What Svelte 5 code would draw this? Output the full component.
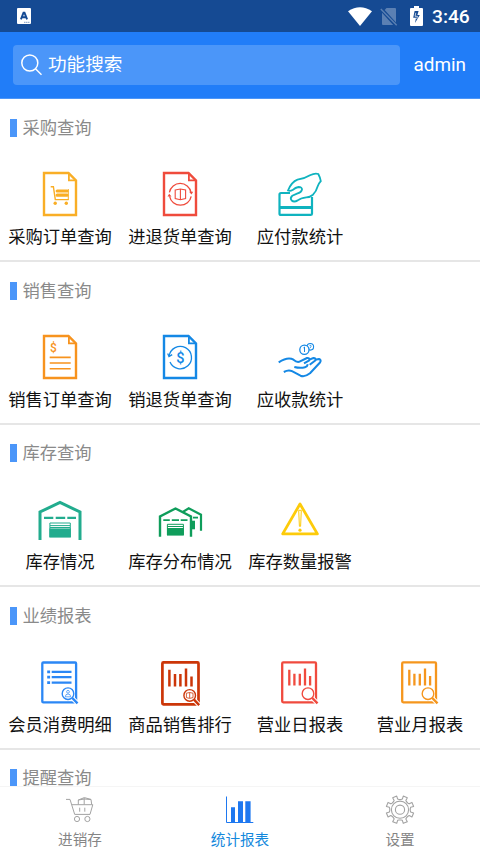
<script>
  const sections = [
    {
      title: '采购查询',
      items: [
        { icon: 'order', label: '采购订单查询', color: '#f9ae26' },
        { icon: 'return', label: '进退货单查询', color: '#ef4b3c' },
        { icon: 'pay', label: '应付款统计', color: '#0fb3bf' }
      ]
    },
    {
      title: '销售查询',
      items: [
        { icon: 'bill', label: '销售订单查询', color: '#f7931e' },
        { icon: 'refund', label: '销退货单查询', color: '#1488e5' },
        { icon: 'receive', label: '应收款统计', color: '#1488e5' }
      ]
    },
    {
      title: '库存查询',
      items: [
        { icon: 'house', label: '库存情况', color: '#22ac8e' },
        { icon: 'houses', label: '库存分布情况', color: '#0f9d5b' },
        { icon: 'warn', label: '库存数量报警', color: '#fdcb0a' }
      ]
    },
    {
      title: '业绩报表',
      items: [
        { icon: 'member', label: '会员消费明细', color: '#2b87f5' },
        { icon: 'rank', label: '商品销售排行', color: '#cc3608' },
        { icon: 'report', label: '营业日报表', color: '#f04a3e' },
        { icon: 'report', label: '营业月报表', color: '#f5961d' }
      ]
    },
    { title: '提醒查询', items: [] }
  ];

  const tabs = [
    { icon: 'cart', label: '进销存' },
    { icon: 'chart', label: '统计报表' },
    { icon: 'gear', label: '设置' }
  ];

  let active = $state(1);

  // eight teeth, with a gap pointing straight up
  const gear = Array.from({ length: 8 }, (_, i) => {
    const mid = i * 45 + 22.5;
    return [[-17, 10.3], [-10, 10.9], [-9, 14], [9, 14], [10, 10.9], [17, 10.3]]
      .map(([d, r]) => {
        const a = ((mid + d) * Math.PI) / 180;
        return `${(20 + r * Math.sin(a)).toFixed(2)},${(19.7 - r * Math.cos(a)).toFixed(2)}`;
      })
      .join(' ');
  }).join(' ');
</script>

{#snippet page()}
  <path d="M14 9H38.5L46 16.5V51H14Z" stroke-width="2.4" />
  <path d="M38.9 9.5V16.3H45.5" stroke-width="1.8" />
{/snippet}

{#snippet glass(x, y)}
  <path d="M{x + 4} {y + 4}L{x + 9.5} {y + 9.7}" stroke="#fff" stroke-width="4.4" />
  <circle cx={x} cy={y} r="7" fill="#fff" stroke="none" />
  <circle cx={x} cy={y} r="5.8" stroke-width="1.4" />
  <path d="M{x + 4.3} {y + 4.3}L{x + 9.5} {y + 9.7}" stroke-width="2.4" />
{/snippet}

<div class="app">
  <div class="status">
    <svg class="ime" width="14" height="16" viewBox="0 0 14 16">
      <rect width="14" height="16" rx="1" fill="#fff" />
      <path d="M3.9 11.3L6.5 4.8H7.5L10.1 11.3M5 9.3H9" fill="none" stroke="#154a93" stroke-width="1.9" />
      <path d="M7 14.3H13" stroke="#7f9cc4" stroke-width="1" stroke-dasharray="1.5 .5" />
    </svg>
    <svg class="wifi" width="24" height="19" viewBox="0 0 24 19">
      <path d="M0 4.3Q12-3.6 24 4.3L12 19Z" fill="#fff" />
    </svg>
    <svg class="sim" width="18" height="19" viewBox="0 0 18 19">
      <path d="M6.5 1H15Q16 1 16 2V15.6L4.7 3ZM2 5.8L13.2 18H3Q2 18 2 17Z" fill="#5b80b3" />
      <path d="M.8 2L16.7 18.3" stroke="#5b80b3" stroke-width="1.4" />
    </svg>
    <svg class="battery" width="13" height="20" viewBox="0 0 13 20">
      <path d="M4 0H9V2H12Q13 2 13 3V19Q13 20 12 20H1Q0 20 0 19V3Q0 2 1 2H4Z" fill="#fff" />
      <path d="M4.6 5H8.6L7.4 9H9.8L5 17L6 11.8H3.2Z" fill="#154a93" />
      <path d="M5.8 6.8L5 10.3H7.5L6.6 13" fill="none" stroke="#fff" stroke-width=".7" />
    </svg>
    <span class="clock">3:46</span>
  </div>

  <header class="header">
    <div class="search">
      <svg width="22" height="22" viewBox="0 0 22 22" fill="none" stroke="#fff" stroke-width="1.5">
        <circle cx="8.8" cy="9" r="8" />
        <path d="M14.5 14.8L20.5 20.7" />
      </svg>
      <span>功能搜索</span>
    </div>
    <span class="user">admin</span>
  </header>

  <main class="content">
    {#each sections as section}
      <section class="section">
        <h2>{section.title}</h2>
        <div class="grid">
          {#each section.items as item}
            <div class="item">
              <svg class="icon" width="60" height="60" viewBox="0 0 60 60" style:color={item.color}>
                {#if item.icon === 'order'}
                  {@render page()}
                  <path d="M20.7 22.8H23.4L25.3 35.6H38.6" stroke-width="1.4" />
                  <path d="M27.2 27H37M27.2 31.2H37" stroke-width="3.2" stroke-linecap="round" />
                  <path d="M38.3 25V36" stroke-width="1" />
                  <circle cx="25.2" cy="39.3" r="1.7" class="solid" />
                  <circle cx="36.3" cy="39.3" r="1.7" class="solid" />
                {:else if item.icon === 'return'}
                  {@render page()}
                  <path d="M19.4 28.3A11 11 0 0 1 41 28.3M41.2 32.3A11 11 0 0 1 19.6 32.3" stroke-width="1.3" />
                  <path d="M39 27.8H43.2L41.5 30.5ZM17.5 32.6L19.2 29.8L21.5 32.6Z" class="solid" />
                  <path d="M25.2 26L30.3 25L35.6 26V34.5L30.3 35.7L25.2 34.5ZM30.4 25.5V35.3" stroke-width="1.1" />
                {:else if item.icon === 'pay'}
                  <path d="M20 29H11Q9.5 29 9.5 30.5V49.7Q9.5 50.9 11 50.9H40.5Q42 50.9 42 49.7V33" stroke-width="2.2" />
                  <path d="M9.5 43.6H42" stroke-width="3" />
                  <path d="M18 26.5Q21.5 18 27.5 15.7Q35 14.3 40 11.2Q45 8.8 48.3 10Q50 13 50.8 17.2Q48.7 19.5 47.7 22.2Q46.2 27.5 43 30.7Q40 33.3 36.3 33.3Q30.5 34 27.7 36.4Q24 38.5 21.7 36.5Q19.6 34 22.3 31.7L27 29.6Q31.5 28.3 32 25.5Q32.2 23 28.5 23Q25.5 23.4 22.5 26.1Q20.3 27.5 18 26.5Z" stroke-width="1.8" fill="#fff" />
                {:else if item.icon === 'bill'}
                  {@render page()}
                  <text x="23.5" y="24.8" font-size="12">$</text>
                  <path d="M19.7 30.4H40.7M19.7 36H40.7M19.7 41.7H40.7" stroke-width="1.6" />
                {:else if item.icon === 'refund'}
                  {@render page()}
                  <path d="M19.2 29A11.2 11.2 0 1 1 20 35" stroke-width="1.3" />
                  <path d="M17.7 26.4L19 29.5L22.2 27.6" stroke-width="1.3" />
                  <text x="30.3" y="35.5" font-size="14.5">$</text>
                {:else if item.icon === 'receive'}
                  <circle cx="40.3" cy="19.8" r="3.3" stroke-width="1.1" />
                  <path d="M39.5 18.3Q41.5 17.8 41 19.7L39.8 21.3" stroke-width=".8" />
                  <circle cx="34.4" cy="22.7" r="4.6" stroke-width="1.3" fill="#fff" />
                  <path d="M33.5 20.8L34.5 20V25" stroke-width="1" />
                  <g stroke-width="2" stroke-linejoin="round">
                    <path d="M8.7 35.3Q18 29.3 23.5 32.7Q26.5 35.4 29 34.8L37 31Q40 30.8 39.3 33.3L34 36.3" />
                    <path d="M24.3 40Q30 41.5 35 40.3Q37.3 39.7 37.8 37.2" />
                    <path d="M39.3 32.6L43.5 31Q46.2 31 45.3 33.5L39.7 37.8" />
                    <path d="M45.3 32.8L49 32Q51.7 33 50 35.5L40 46.3Q35 50.3 30.5 48.7L22 44.2Q18.5 42.5 13.8 45" />
                  </g>
                {:else if item.icon === 'house'}
                  <path d="M10 51V23L30 13.5L50 23V51" stroke-width="3" />
                  <path d="M14 28.8H23.3M25.7 28.8H35.2M37.3 28.8H46" stroke-width="2.2" />
                  <path d="M19.9 48V34H40.3V48M20 36.6H40M20 38.5H40" stroke-width="1" />
                  <path d="M19.4 39.4H40.8V48.6H19.4Z" class="solid" />
                {:else if item.icon === 'houses'}
                  <path d="M32.8 23L38.7 19.3L51 25.7V41.8" stroke-width="2.2" />
                  <path d="M43 28.6H48" stroke-width="1.8" />
                  <path d="M42 31.7H45V40.3H42Z" class="solid" />
                  <path d="M10 47.8V27.5L25.5 19.5L41 27.5V47.8" stroke-width="2.4" />
                  <path d="M13.3 31.1H19.8M21.8 31.1H29M30.7 31.1H37.5" stroke-width="1.8" />
                  <path d="M17.4 46V35.3H33.4V46M17.5 37.5H33.4" stroke-width="1" />
                  <path d="M17 39H33.8V46.6H17Z" class="solid" />
                {:else if item.icon === 'warn'}
                  <path d="M30 15L12.7 44.9H47.4Z" stroke-width="2.8" stroke-linejoin="round" />
                  <path d="M28.7 21.3H31.3L30.6 37.3H29.4Z" stroke-width="1" />
                  <circle cx="30" cy="41.2" r="1.6" class="solid" />
                {:else if item.icon === 'member'}
                  <rect x="12.3" y="10.5" width="33.8" height="39.9" rx="1" stroke-width="2.3" />
                  <path d="M17.2 19.8H20.1M17.2 25.2H20.1M17.2 30.7H20.1" stroke-width="2.8" />
                  <path d="M21.7 19.8H41.5M21.7 25.2H41.5M21.7 30.7H41.5" stroke-width="2.3" />
                  {@render glass(38, 41.7)}
                  <circle cx="38" cy="39.8" r="1.4" stroke-width=".7" />
                  <path d="M35.3 44.8Q35.3 42 38 42Q40.7 42 40.7 44.8Z" stroke-width=".7" />
                {:else if item.icon === 'rank'}
                  <rect x="12.4" y="10.4" width="36.1" height="41.9" rx="1" stroke-width="2.7" />
                  <path d="M19.4 17.7V34.4M25 22V34.4M30.4 22V34.4M36 16.4V34.4M41.5 24.4V34.4" stroke-width="2.5" />
                  {@render glass(39.7, 43.4)}
                  <path d="M36.4 41.2L39.7 40.5L43 41.2V45.6L39.7 46.4L36.4 45.6ZM39.7 40.6V46" stroke-width=".8" />
                {:else}
                  <rect x="12.2" y="10.4" width="33.8" height="39.9" rx="1" stroke-width="2.3" />
                  <path d="M19.3 17.7V33.4M24.4 21.7V33.4M29.8 21.7V33.4M35 16.4V33.4M40.1 24V33.4" stroke-width="2.3" />
                  {@render glass(38, 41.7)}
                {/if}
              </svg>
              <span>{item.label}</span>
            </div>
          {/each}
        </div>
      </section>
    {/each}
  </main>

  <nav class="tabbar">
    {#each tabs as tab, i}
      <button class="tab" class:active={active === i} onclick={() => (active = i)}>
        <svg width="40" height="36" viewBox="0 0 40 36" fill="none">
          {#if tab.icon === 'cart'}
            <g stroke="#a3a3a3" stroke-width="1">
              <path d="M6 9.4H10L14.7 24.4H30L32.8 14.7H12M18.3 14.5V10L24.3 7.6L31 9.4L31.7 14.5M18.3 10L24.5 9L31 9.6M24.2 8V14.5M19.7 17.7V21.7M24.8 17.7V21.7" />
              <circle cx="17" cy="29" r="2.6" />
              <circle cx="27.4" cy="29" r="2.6" />
            </g>
          {:else if tab.icon === 'chart'}
            <path d="M6.5 6.5V32.5H33.3" stroke="#1e78f0" stroke-width="1" />
            <path d="M11 17.3H15V32H11ZM18 11.3H23V32H18ZM25.3 11.3H30.6V32H25.3Z" fill="#1e78f0" />
          {:else}
            <g stroke="#a3a3a3" stroke-width="1.1" stroke-linejoin="round">
              <polygon points={gear} />
              <circle cx="20" cy="19.7" r="8.6" />
              <circle cx="20" cy="19.7" r="4.6" />
            </g>
          {/if}
        </svg>
        <span>{tab.label}</span>
      </button>
    {/each}
  </nav>
</div>

<style>
  :global(body) {
    background: #fff;
    overflow: hidden;
  }

  .app {
    display: flex;
    flex-direction: column;
    width: 480px;
    height: 853px;
    background: #fff;
    overflow: hidden;
    font-family: Roboto, 'Noto Sans CJK SC', sans-serif;
  }

  svg { display: block; flex-shrink: 0; }

  .status {
    display: flex;
    align-items: center;
    height: 32px;
    flex-shrink: 0;
    box-sizing: border-box;
    padding: 0 11px 0 17px;
    background: #154a93;
  }

  .ime { margin-right: auto; }
  .wifi { margin-right: 8px; }
  .battery { margin-left: 12px; }

  .clock {
    width: 37px;
    margin-left: 9px;
    color: #fff;
    font-size: 19.2px;
    font-weight: 500;
    line-height: 33px;
  }

  .header {
    display: flex;
    align-items: center;
    height: 67px;
    flex-shrink: 0;
    box-sizing: border-box;
    padding: 0 14px 0 13px;
    background: #217df8;
    border-bottom: 1px solid #4d96f8;
  }

  .search {
    display: flex;
    align-items: center;
    gap: 5px;
    width: 387px;
    height: 40px;
    box-sizing: border-box;
    padding-left: 8px;
    border-radius: 4px;
    background: #4b96f9;
    color: #fff;
    font-size: 18.6px;
    line-height: 41px;
  }

  .user {
    margin-left: auto;
    color: #fff;
    font-size: 18.9px;
    line-height: 24px;
  }

  .content {
    flex: 1;
    min-height: 0;
    padding-top: 0.6px;
    overflow: hidden;
  }

  .section {
    height: 162.6px;
    box-sizing: border-box;
    border-bottom: 2px solid #e6e6e6;
  }

  h2 {
    display: flex;
    align-items: center;
    gap: 5.5px;
    margin: 0;
    padding: 16.4px 0 0 10px;
    height: 24px;
    color: #8a8a8a;
    font-size: 17.3px;
    font-weight: 400;
    line-height: 24px;
  }

  h2::before {
    content: '';
    width: 7px;
    height: 18px;
    background: #4b96f9;
  }

  .grid {
    display: grid;
    grid-template-columns: repeat(4, 120px);
    padding-top: 24px;
  }

  .item {
    display: flex;
    flex-direction: column;
    align-items: center;
    color: #111;
    font-size: 17.3px;
    line-height: 27px;
    white-space: nowrap;
  }

  .icon {
    fill: none;
    stroke: currentColor;
  }

  .icon .solid {
    fill: currentColor;
    stroke: none;
  }

  .icon text {
    fill: currentColor;
    stroke: none;
    font-family: Roboto, sans-serif;
    font-weight: 500;
    text-anchor: middle;
  }

  .tabbar {
    display: grid;
    grid-template-columns: repeat(3, 1fr);
    height: 67px;
    flex-shrink: 0;
    box-sizing: border-box;
    border-top: 1px solid #f5f5f5;
    background: #fff;
  }

  .tab {
    display: flex;
    flex-direction: column;
    align-items: center;
    padding: 3px 0 0;
    border: none;
    background: none;
    color: #858585;
    font-family: inherit;
    font-size: 14.6px;
    line-height: 29px;
  }

  .tab.active { color: #1488dc; }
</style>
